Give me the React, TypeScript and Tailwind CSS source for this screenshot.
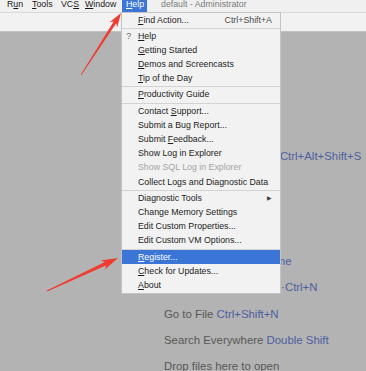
import type { ReactNode } from "react";

type Item =
  | { kind: "sep" }
  | {
      kind: "item";
      label: ReactNode;
      shortcut?: string;
      icon?: string;
      disabled?: boolean;
      active?: boolean;
      submenu?: boolean;
    };

function Mn({ children }: { children: ReactNode }) {
  return <span className="underline underline-offset-[1px] decoration-[0.8px]">{children}</span>;
}

const items: Item[] = [
  { kind: "item", label: <><Mn>F</Mn>ind Action...</>, shortcut: "Ctrl+Shift+A" },
  { kind: "sep" },
  { kind: "item", label: <><Mn>H</Mn>elp</>, icon: "?" },
  { kind: "item", label: <><Mn>G</Mn>etting Started</> },
  { kind: "item", label: <><Mn>D</Mn>emos and Screencasts</> },
  { kind: "item", label: <><Mn>T</Mn>ip of the Day</> },
  { kind: "sep" },
  { kind: "item", label: <><Mn>P</Mn>roductivity Guide</> },
  { kind: "sep" },
  { kind: "item", label: <>Contact <Mn>S</Mn>upport...</> },
  { kind: "item", label: "Submit a Bug Report..." },
  { kind: "item", label: <>Submit <Mn>F</Mn>eedback...</> },
  { kind: "item", label: "Show Log in Explorer" },
  { kind: "item", label: "Show SQL Log in Explorer", disabled: true },
  { kind: "item", label: "Collect Logs and Diagnostic Data" },
  { kind: "sep" },
  { kind: "item", label: "Diagnostic Tools", submenu: true },
  { kind: "item", label: "Change Memory Settings" },
  { kind: "item", label: "Edit Custom Properties..." },
  { kind: "item", label: "Edit Custom VM Options..." },
  { kind: "sep" },
  { kind: "item", label: <><Mn>R</Mn>egister...</>, active: true },
  { kind: "item", label: <><Mn>C</Mn>heck for Updates...</> },
  { kind: "item", label: <><Mn>A</Mn>bout</> },
];

// hint lines of the empty editor; rows 2-4 sit fully behind the menu
const hints = [
  { label: "Open Module Settings ", key: "Ctrl+Alt+Shift+S" },
  { label: "", key: "" },
  { label: "", key: "" },
  { label: "", key: "" },
  { label: "Navigation Bar ", key: "Alt+Home" },
  { label: "Go to Class or Symbol ·", key: "Ctrl+N" },
  { label: "Go to File ", key: "Ctrl+Shift+N" },
  { label: "Search Everywhere ", key: "Double Shift" },
  { label: "Drop files here to open", key: "" },
];

function arrowPoints(
  x1: number,
  y1: number,
  x2: number,
  y2: number,
  w0: number,
  w1: number,
  headLen: number,
  headW: number
) {
  const dx = x2 - x1;
  const dy = y2 - y1;
  const len = Math.hypot(dx, dy);
  const ux = dx / len;
  const uy = dy / len;
  const nx = -uy;
  const ny = ux;
  const bx = x2 - ux * headLen;
  const by = y2 - uy * headLen;
  const sx = x2 - ux * headLen * 0.8;
  const sy = y2 - uy * headLen * 0.8;
  const pts = [
    [x1 + (nx * w0) / 2, y1 + (ny * w0) / 2],
    [sx + (nx * w1) / 2, sy + (ny * w1) / 2],
    [bx + (nx * headW) / 2, by + (ny * headW) / 2],
    [x2, y2],
    [bx - (nx * headW) / 2, by - (ny * headW) / 2],
    [sx - (nx * w1) / 2, sy - (ny * w1) / 2],
    [x1 - (nx * w0) / 2, y1 - (ny * w0) / 2],
  ];
  return pts.map((p) => p[0].toFixed(1) + "," + p[1].toFixed(1)).join(" ");
}

function HelpMenu() {
  return (
    <div className="absolute left-[121px] top-[12px] w-[160px] bg-[#f2f2f2] border border-[#c4c4c4] text-[8.8px] text-[#1c1c1c]">
      {items.map((it, i) =>
        it.kind === "sep" ? (
          <div key={i} className="h-[2px] flex items-center">
            <div className="h-px w-full bg-[#d3d3d3]" />
          </div>
        ) : (
          <div
            key={i}
            className={
              "relative h-[14.2px] flex items-center pl-[16px] pr-[8px] whitespace-nowrap " +
              (it.active ? "bg-[#3b76d6] text-white " : "") +
              (it.disabled ? "text-[#a3a3a3]" : "")
            }
          >
            {it.icon ? (
              <span className="absolute left-[4px] text-[9.5px] text-[#6e6e6e]">{it.icon}</span>
            ) : null}
            <span className="flex-1">{it.label}</span>
            {it.shortcut ? <span className="text-[#4a4a4a]">{it.shortcut}</span> : null}
            {it.submenu ? <span className="text-[6px] text-[#404040]">▶</span> : null}
          </div>
        )
      )}
    </div>
  );
}

export default function App() {
  return (
    <div className="relative w-[366px] h-[371px] overflow-hidden flex flex-col bg-[#b3b3b3] font-['Liberation_Sans',Arial,sans-serif]">
      <div className="h-[12px] shrink-0 bg-[#f0f0f0] flex items-start pl-[7px] text-[8.8px] leading-[8px] text-[#1a1a1a] whitespace-nowrap">
        <span className="w-[25px]">R<Mn>u</Mn>n</span>
        <span className="w-[29px]"><Mn>T</Mn>ools</span>
        <span className="w-[24px]">VC<Mn>S</Mn></span>
        <span className="w-[37px]"><Mn>W</Mn>indow</span>
        <span className="w-[25px] h-[12px] pl-[4px] bg-[#3b76d6] text-white"><Mn>H</Mn>elp</span>
        <span className="ml-[14px] text-[#7a7a7a]">default - Administrator</span>
      </div>
      <div className="h-[20px] shrink-0 bg-[#f2f2f2] border-t border-[#d9d9d9] border-b border-b-[#c2c2c2]" />
      <div className="flex-1 pl-[164px] pt-[111px] text-[11.4px] leading-[26.25px] text-[#575757] whitespace-nowrap">
        {hints.map((h, i) => (
          <div key={i} className="h-[26.25px]">
            {h.label}
            <span className="text-[#4e5fa0]">{h.key}</span>
          </div>
        ))}
      </div>
      <HelpMenu />
      <svg className="absolute inset-0 pointer-events-none" width="366" height="371" viewBox="0 0 366 371">
        <polygon points={arrowPoints(81, 75, 121, 13, 0.8, 3, 14, 9)} fill="#ef3b30" />
        <polygon points={arrowPoints(47, 291, 118, 258, 0.8, 3.5, 17, 10)} fill="#ef3b30" />
      </svg>
    </div>
  );
}
